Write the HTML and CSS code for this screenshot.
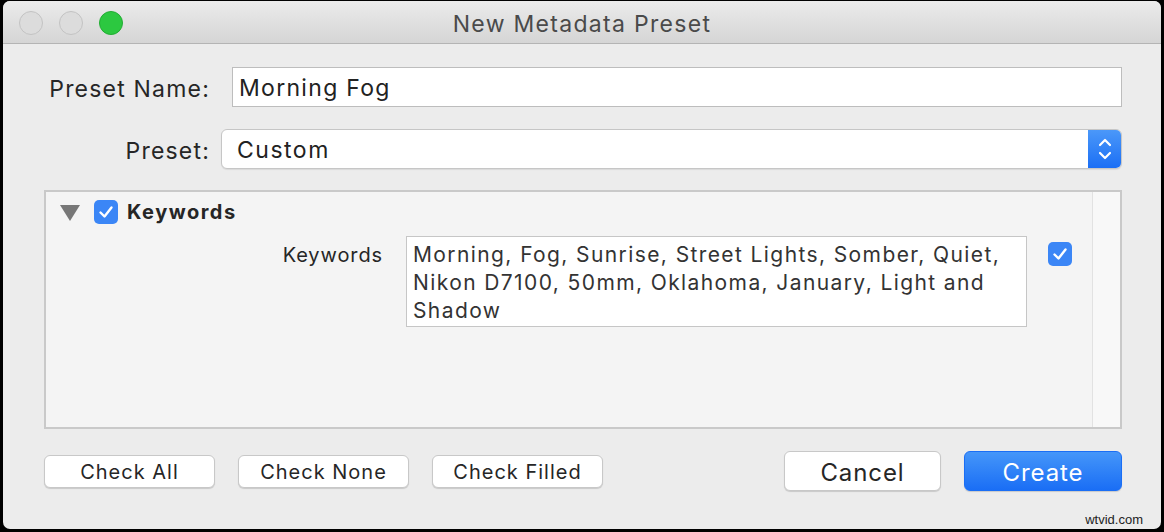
FILE: index.html
```html
<!DOCTYPE html>
<html>
<head>
<meta charset="utf-8">
<link rel="stylesheet" href="styles.css">
</head>
<body>
<div class="window">
  <div class="titlebar">
    <div class="lights">
      <span class="light grey"></span>
      <span class="light grey"></span>
      <span class="light green"></span>
    </div>
    <div class="title">New Metadata Preset</div>
  </div>
  <div class="content">
    <div class="row">
      <label class="label">Preset Name:</label>
      <div class="textfield">Morning Fog</div>
    </div>
    <div class="row">
      <label class="label">Preset:</label>
      <div class="popup">
        <span class="popup-text">Custom</span>
        <span class="stepper">
          <svg width="16" height="26" viewBox="0 0 16 26"><path d="M3 9 L8 4 L13 9" fill="none" stroke="#fff" stroke-width="2.2" stroke-linecap="round" stroke-linejoin="round"/><path d="M3 17 L8 22 L13 17" fill="none" stroke="#fff" stroke-width="2.2" stroke-linecap="round" stroke-linejoin="round"/></svg>
        </span>
      </div>
    </div>
    <div class="panel">
      <div class="panel-main">
        <div class="section-head">
          <svg class="tri" width="20" height="16" viewBox="0 0 20 16"><path d="M0 0 H20 L10 16 Z" fill="#777"/></svg>
          <span class="check"><svg width="24" height="24" viewBox="0 0 24 24"><path d="M6.5 12.5 L10.5 16.5 L17.5 7.5" fill="none" stroke="#fff" stroke-width="2.4" stroke-linecap="round" stroke-linejoin="round"/></svg></span>
          <span class="section-title">Keywords</span>
        </div>
        <div class="kw-row">
          <span class="kw-label">Keywords</span>
          <div class="kw-box">Morning, Fog, Sunrise, Street Lights, Somber, Quiet, Nikon D7100, 50mm, Oklahoma, January, Light and Shadow</div>
          <span class="check kw-check"><svg width="24" height="24" viewBox="0 0 24 24"><path d="M6.5 12.5 L10.5 16.5 L17.5 7.5" fill="none" stroke="#fff" stroke-width="2.4" stroke-linecap="round" stroke-linejoin="round"/></svg></span>
        </div>
      </div>
      <div class="scroller"></div>
    </div>
    <div class="buttons">
      <div class="left-buttons">
        <button class="btn small">Check All</button>
        <button class="btn small">Check None</button>
        <button class="btn small">Check Filled</button>
      </div>
      <div class="right-buttons">
        <button class="btn big">Cancel</button>
        <button class="btn big primary">Create</button>
      </div>
    </div>
  </div>
  <div class="watermark">wtvid.com</div>
</div>
</body>
</html>
```
FILE: styles.css
```css
html, body {
  margin: 0;
  padding: 0;
  background: #000;
  width: 1164px;
  height: 532px;
  overflow: hidden;
}
.window {
  position: relative;
  margin: 1px 0 0 3px;
  width: 1158px;
  height: 528px;
  background: #ececec;
  border-radius: 7px;
  overflow: hidden;
  font-family: Inter, "Open Sans", "Liberation Sans", sans-serif;
  color: #262626;
}
.titlebar {
  position: relative;
  height: 42px;
  background: linear-gradient(#ebebeb, #d5d5d5);
  border-bottom: 1px solid #b4b4b4;
  display: flex;
  align-items: center;
  justify-content: center;
}
.lights {
  position: absolute;
  left: 16px;
  top: 10px;
  display: flex;
  gap: 16px;
}
.light {
  width: 24px;
  height: 24px;
  border-radius: 50%;
  box-sizing: border-box;
}
.light.grey {
  background: #dcdcdc;
  border: 1px solid #c3c3c3;
}
.light.green {
  background: #2cc840;
  border: 1px solid #22ad33;
}
.title {
  font-size: 23px;
  letter-spacing: 1.3px;
  color: #4a4a4a;
  padding-top: 3px;
}
.content {
  padding: 23px 39px 0 41px;
  display: flex;
  flex-direction: column;
}
.row {
  display: flex;
  align-items: center;
  height: 40px;
  margin-bottom: 22px;
}
.row + .row {
  margin-bottom: 21px;
}
.label {
  width: 166px;
  text-align: right;
  font-size: 23px;
  letter-spacing: 1.2px;
  margin-right: -1px;
  padding-top: 3px;
  color: #262626;
  white-space: nowrap;
}
.textfield {
  margin-left: 23px;
  flex: 1;
  height: 40px;
  box-sizing: border-box;
  background: #fff;
  border: 1px solid #bdbdbd;
  font-size: 23px;
  letter-spacing: 1.3px;
  line-height: 40px;
  padding-left: 6px;
  color: #222;
}
.popup {
  margin-left: 12px;
  flex: 1;
  height: 40px;
  box-sizing: border-box;
  background: #fff;
  border: 1px solid #c6c6c6;
  border-radius: 6px;
  display: flex;
  overflow: hidden;
  box-shadow: 0 1px 1px rgba(0,0,0,0.08);
}
.popup-text {
  flex: 1;
  font-size: 23px;
  letter-spacing: 1.5px;
  line-height: 40px;
  padding-left: 15px;
  color: #222;
}
.stepper {
  width: 33px;
  background: linear-gradient(#4b98f9, #1b6ff5);
  display: flex;
  align-items: center;
  justify-content: center;
}
.panel {
  height: 239px;
  box-sizing: border-box;
  border: 2px solid #c9c9c9;
  background: #f4f4f4;
  display: flex;
}
.panel-main {
  flex: 1;
  display: flex;
  flex-direction: column;
}
.scroller {
  width: 27px;
  background: #f8f8f8;
  border-left: 1px solid #e2e2e2;
}
.section-head {
  display: flex;
  align-items: center;
  height: 40px;
  padding-left: 14px;
}
.tri {
  margin-top: 1px;
}
.check {
  width: 24px;
  height: 24px;
  border-radius: 5px;
  background: #3b86f6;
  display: inline-flex;
  align-items: center;
  justify-content: center;
}
.section-head .check {
  margin-left: 14px;
}
.section-title {
  margin-left: 9px;
  font-size: 20px;
  letter-spacing: 1.5px;
  font-weight: 700;
  color: #262626;
}
.kw-row {
  display: flex;
  align-items: flex-start;
  margin-top: 4px;
}
.kw-label {
  width: 337px;
  text-align: right;
  font-size: 20px;
  letter-spacing: 0.9px;
  margin-right: -1px;
  line-height: 28px;
  padding-top: 5px;
  color: #262626;
}
.kw-box {
  margin-left: 24px;
  width: 621px;
  height: 91px;
  box-sizing: border-box;
  background: #fff;
  border: 1px solid #c6c6c6;
  font-size: 21px;
  letter-spacing: 1.4px;
  line-height: 28px;
  padding: 4px 6px 0 6px;
  color: #333;
}
.kw-check {
  margin-left: 21px;
  margin-top: 6px;
}
.buttons {
  margin-top: 22px;
  display: flex;
  justify-content: space-between;
  align-items: center;
  height: 40px;
}
.left-buttons, .right-buttons {
  display: flex;
  align-items: center;
  gap: 23px;
}
.btn {
  font-family: Inter, "Open Sans", "Liberation Sans", sans-serif;
  background: #fff;
  border: 1px solid #c8c8c8;
  border-radius: 6px;
  box-shadow: 0 1px 1px rgba(0,0,0,0.15);
  color: #262626;
  padding: 0;
  box-sizing: border-box;
}
.btn.small {
  width: 171px;
  height: 33px;
  font-size: 20px;
  letter-spacing: 1px;
  padding-top: 2px;
}
.btn.big {
  width: 157px;
  height: 40px;
  font-size: 24px;
  letter-spacing: 0.9px;
  padding-top: 2px;
}
.btn.primary {
  width: 158px;
  background: linear-gradient(#4596f9, #1a6ef5);
  border-color: #1a6ef5;
  color: #fff;
}
.watermark {
  position: absolute;
  right: 18px;
  bottom: 2px;
  font-size: 13px;
  color: #222;
  font-family: "Liberation Sans", sans-serif;
}
```
